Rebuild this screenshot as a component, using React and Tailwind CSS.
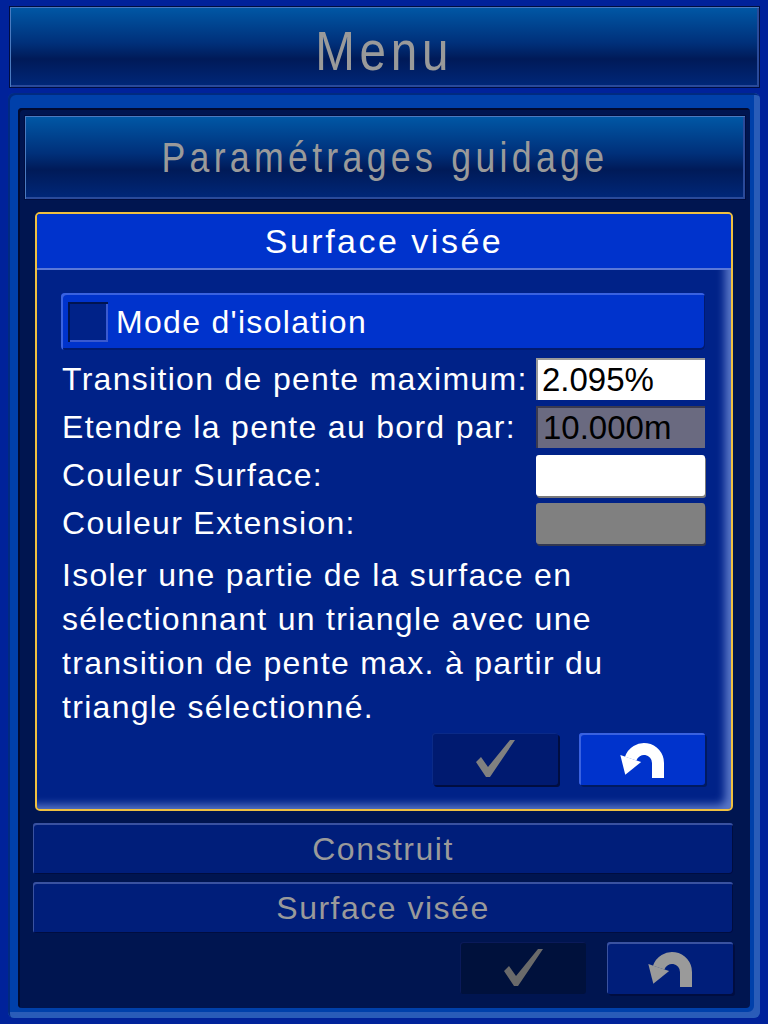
import React from "react";

const sans = { fontFamily: '"Liberation Sans", Arial, sans-serif' };

function UndoIcon({ color = "#ffffff" }) {
  return (
    <svg viewBox="0 0 48 37" width="48" height="37">
      <path d="M40 37 V22 A14 14 0 0 0 12.7 17.6" fill="none" stroke={color} strokeWidth="12" />
      <polygon points="23.1,21.1 2.3,14.1 7.3,33.8" fill={color} />
    </svg>
  );
}

function CheckIcon({ color = "#808080" }) {
  return (
    <svg viewBox="0 0 41 38" width="41" height="38">
      <polygon points="1,22 6,17 13,27 35,0 40,0 15,37 11,37" fill={color} />
    </svg>
  );
}

const headerBg =
  "border border-[#000d40] shadow-[inset_1px_1px_0_#4a7ac0,inset_-2px_-2px_0_#2a4a9a] bg-[linear-gradient(to_bottom,#0058a6_0%,#00307a_45%,#001a58_65%,#00287a_100%)]";

export default function App() {
  return (
    <div className="w-[768px] h-[1024px] bg-[#00229a] flex flex-col px-[8px] pt-[6px] pb-[6px] gap-[5px] overflow-hidden" style={sans}>
      {/* Menu header */}
      <div className={`h-[82px] shrink-0 ml-[1px] flex items-center justify-center pt-[7px] ${headerBg}`}>
        <span className="inline-block text-[#9a9a9a] text-[56px] leading-none tracking-[0.1em] scale-x-[0.85]">Menu</span>
      </div>

      {/* Outer panel */}
      <div className="flex-1 flex flex-col bg-[#0040aa] rounded-[6px] shadow-[inset_2px_2px_0_#002a80,inset_-6px_-6px_0_#2a5cb8] pl-[10px] pr-[10px] pt-[15px] pb-[10px]">
        <div className="flex-1 flex flex-col bg-[#001550] rounded-[4px] shadow-[inset_2px_2px_0_#000a30] pt-[7px]">
          {/* Paramétrages header */}
          <div className={`h-[85px] shrink-0 ml-[6px] mr-[4px] flex items-center justify-center ${headerBg}`}>
            <span className="inline-block text-[#9a9a9a] text-[42px] leading-none tracking-[0.12em] scale-x-[0.85]">Paramétrages guidage</span>
          </div>

          <div className="flex flex-col ml-[15px] mr-[17px] mt-[12px]">
            {/* Dialog */}
            <div className="ml-[2px] h-[599px] border-2 border-[#f0c040] rounded-[5px] bg-[#002288] flex flex-col shadow-[inset_-10px_-8px_8px_-4px_#5a78c8] overflow-hidden">
              <div className="h-[56px] shrink-0 bg-[#0033cc] border-b-2 border-[#5a78d8] flex items-center justify-center">
                <span className="text-white text-[34px] leading-none tracking-[2.5px]">Surface visée</span>
              </div>
              <div className="flex-1 flex flex-col pl-[24px] pr-[26px] pt-[23px]">
                {/* Mode d'isolation */}
                <div className="h-[57px] shrink-0 bg-[#0033cc] rounded-[4px] shadow-[inset_2px_2px_0_#3a62e0,inset_-1px_-2px_0_#001a70] flex items-center pl-[7px] gap-[8px]">
                  <div className="w-[40px] h-[40px] bg-[#002288] shadow-[inset_2px_2px_0_#001450,inset_-2px_-2px_0_#3a5ad0]" />
                  <span className="text-white text-[32px] leading-none tracking-[1.3px]">Mode d'isolation</span>
                </div>

                <div className="flex flex-col gap-[6px] mt-[8px]">
                  <div className="h-[42px] flex items-center justify-between">
                    <span className="text-white text-[32px] leading-none tracking-[1.3px] pl-[1px]">Transition de pente maximum:</span>
                    <div className="w-[169px] h-[42px] shrink-0 bg-white shadow-[inset_2px_2px_0_#9a9a9a] flex items-center pl-[6px]">
                      <span className="text-black text-[33px] leading-none">2.095%</span>
                    </div>
                  </div>
                  <div className="h-[42px] flex items-center justify-between">
                    <span className="text-white text-[32px] leading-none tracking-[1.3px] pl-[1px]">Etendre la pente au bord par:</span>
                    <div className="w-[169px] h-[42px] shrink-0 bg-[#6a6a80] shadow-[inset_2px_2px_0_#3a3a50] flex items-center pl-[7px]">
                      <span className="text-black text-[33px] leading-none">10.000m</span>
                    </div>
                  </div>
                  <div className="h-[42px] flex items-center justify-between">
                    <span className="text-white text-[32px] leading-none tracking-[1.3px] pl-[1px]">Couleur Surface:</span>
                    <div className="w-[169px] h-[41px] shrink-0 bg-white rounded-[3px] shadow-[1px_2px_0_#7a7a7a]" />
                  </div>
                  <div className="h-[42px] flex items-center justify-between">
                    <span className="text-white text-[32px] leading-none tracking-[1.3px] pl-[1px]">Couleur Extension:</span>
                    <div className="w-[169px] h-[41px] shrink-0 bg-[#808080] rounded-[3px] shadow-[1px_2px_0_#333850]" />
                  </div>
                </div>

                <p className="text-white text-[32px] leading-[44px] tracking-[1.3px] mt-[9px] pl-[1px]">
                  Isoler une partie de la surface en<br />
                  sélectionnant un triangle avec une<br />
                  transition de pente max. à partir du<br />
                  triangle sélectionné.
                </p>

                <div className="flex justify-end gap-[21px] mt-[4px]">
                  <div className="w-[126px] h-[52px] bg-[#001a70] rounded-[3px] shadow-[inset_1px_1px_0_#0a2a88,2px_2px_0_#000d40] flex items-center justify-center">
                    <CheckIcon color="#808080" />
                  </div>
                  <div className="w-[126px] h-[52px] bg-[#0033cc] rounded-[3px] shadow-[inset_2px_2px_0_#3a62e0,2px_2px_0_#001a60] flex items-center justify-center">
                    <UndoIcon color="#ffffff" />
                  </div>
                </div>
              </div>
            </div>

            {/* List items */}
            <div className="h-[51px] mt-[12px] bg-[#001e7a] rounded-[3px] shadow-[inset_1px_2px_0_#3a52a0,inset_-1px_-1px_0_#000d40] flex items-center justify-center">
              <span className="text-[#9a9a9a] text-[32px] leading-none tracking-[1.5px]">Construit</span>
            </div>
            <div className="h-[51px] mt-[8px] bg-[#001e7a] rounded-[3px] shadow-[inset_1px_2px_0_#3a52a0,inset_-1px_-1px_0_#000d40] flex items-center justify-center">
              <span className="text-[#9a9a9a] text-[32px] leading-none tracking-[1.5px]">Surface visée</span>
            </div>

            <div className="flex justify-end gap-[21px] mt-[9px]">
              <div className="w-[126px] h-[52px] bg-[#00113c] rounded-[3px] shadow-[inset_1px_1px_0_#0a1a5a] flex items-center justify-center">
                <CheckIcon color="#6a6a6a" />
              </div>
              <div className="w-[126px] h-[52px] bg-[#001e7a] rounded-[3px] shadow-[inset_1px_2px_0_#3a52a0,2px_2px_0_#000d40] flex items-center justify-center">
                <UndoIcon color="#9a9a9a" />
              </div>
            </div>
          </div>
        </div>
      </div>
    </div>
  );
}
